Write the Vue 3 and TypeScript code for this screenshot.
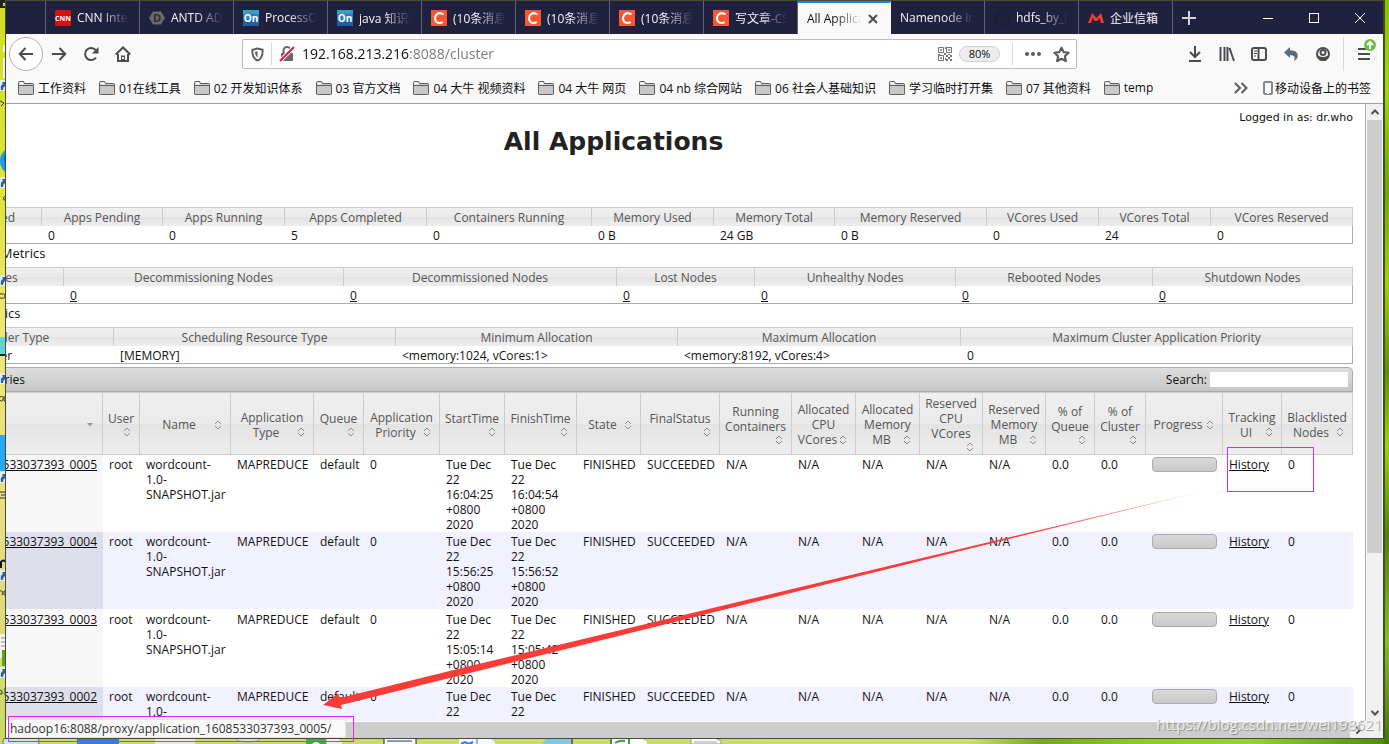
<script setup lang="ts">
import { ref } from 'vue'

interface Tab { label: string; icon: string; active?: boolean }
interface Metric { head: string; value: string; width: number }
interface Column { lines: string[]; width: number; sort: 'inline' | 'below' | 'desc' }
interface AppRow { id: string; start: string; finish: string }

const tabs: Tab[] = [
  { label: 'CNN International', icon: 'cnn' },
  { label: 'ANTD ADMIN', icon: 'antd' },
  { label: 'ProcessOn', icon: 'on' },
  { label: 'java 知识图谱', icon: 'on' },
  { label: '(10条消息)', icon: 'c' },
  { label: '(10条消息)', icon: 'c' },
  { label: '(10条消息)', icon: 'c' },
  { label: '写文章-CSDN', icon: 'c' },
  { label: 'All Applications', icon: '', active: true },
  { label: 'Namenode information', icon: '' },
  { label: 'hdfs_by_lines', icon: 'git' },
  { label: '企业信箱', icon: 'mail' },
]

const bookmarks = ['工作资料', '01在线工具', '02 开发知识体系', '03 官方文档', '04 大牛 视频资料', '04 大牛 网页',
  '04 nb 综合网站', '06 社会人基础知识', '学习临时打开集', '07 其他资料', 'temp']

const clusterMetrics: Metric[] = [
  { head: 'Apps Submitted', value: '5', width: 142 },
  { head: 'Apps Pending', value: '0', width: 121 },
  { head: 'Apps Running', value: '0', width: 122 },
  { head: 'Apps Completed', value: '5', width: 142 },
  { head: 'Containers Running', value: '0', width: 165 },
  { head: 'Memory Used', value: '0 B', width: 122 },
  { head: 'Memory Total', value: '24 GB', width: 121 },
  { head: 'Memory Reserved', value: '0 B', width: 152 },
  { head: 'VCores Used', value: '0', width: 112 },
  { head: 'VCores Total', value: '24', width: 112 },
  { head: 'VCores Reserved', value: '0', width: 142 },
]
const nodeMetrics: Metric[] = [
  { head: 'Active Nodes', value: '3', width: 164 },
  { head: 'Decommissioning Nodes', value: '0', width: 280 },
  { head: 'Decommissioned Nodes', value: '0', width: 273 },
  { head: 'Lost Nodes', value: '0', width: 138 },
  { head: 'Unhealthy Nodes', value: '0', width: 201 },
  { head: 'Rebooted Nodes', value: '0', width: 197 },
  { head: 'Shutdown Nodes', value: '0', width: 200 },
]
const schedulerMetrics: Metric[] = [
  { head: 'Scheduler Type', value: 'Capacity Scheduler', width: 214 },
  { head: 'Scheduling Resource Type', value: '[MEMORY]', width: 282 },
  { head: 'Minimum Allocation', value: '<memory:1024, vCores:1>', width: 282 },
  { head: 'Maximum Allocation', value: '<memory:8192, vCores:4>', width: 283 },
  { head: 'Maximum Cluster Application Priority', value: '0', width: 392 },
]
const sections = [
  { title: '', items: clusterMetrics, link: false },
  { title: 'Cluster Nodes Metrics', items: nodeMetrics, link: true },
  { title: 'Scheduler Metrics', items: schedulerMetrics, link: false },
]

const columns: Column[] = [
  { lines: ['ID'], width: 203, sort: 'desc' },
  { lines: ['User'], width: 37, sort: 'below' },
  { lines: ['Name'], width: 91, sort: 'inline' },
  { lines: ['Application', 'Type'], width: 83, sort: 'inline' },
  { lines: ['Queue'], width: 50, sort: 'below' },
  { lines: ['Application', 'Priority'], width: 76, sort: 'inline' },
  { lines: ['StartTime'], width: 65, sort: 'below' },
  { lines: ['FinishTime'], width: 72, sort: 'below' },
  { lines: ['State'], width: 64, sort: 'inline' },
  { lines: ['FinalStatus'], width: 79, sort: 'below' },
  { lines: ['Running', 'Containers'], width: 72, sort: 'below' },
  { lines: ['Allocated', 'CPU', 'VCores'], width: 64, sort: 'inline' },
  { lines: ['Allocated', 'Memory', 'MB'], width: 64, sort: 'inline' },
  { lines: ['Reserved', 'CPU', 'VCores'], width: 63, sort: 'below' },
  { lines: ['Reserved', 'Memory', 'MB'], width: 63, sort: 'inline' },
  { lines: ['% of', 'Queue'], width: 49, sort: 'below' },
  { lines: ['% of', 'Cluster'], width: 51, sort: 'below' },
  { lines: ['Progress'], width: 77, sort: 'inline' },
  { lines: ['Tracking', 'UI'], width: 59, sort: 'inline' },
  { lines: ['Blacklisted', 'Nodes'], width: 71, sort: 'inline' },
]

const rows: AppRow[] = [
  { id: 'application_1608533037393_0005', start: '16:04:25', finish: '16:04:54' },
  { id: 'application_1608533037393_0004', start: '15:56:25', finish: '15:56:52' },
  { id: 'application_1608533037393_0003', start: '15:05:14', finish: '15:05:42' },
  { id: 'application_1608533037393_0002', start: '14:58:31', finish: '14:59:02' },
]
const stamp = (t: string) => `Tue Dec\n22\n${t}\n+0800\n2020`

const address = ref('192.168.213.216:8088/cluster')
const search = ref('')
const pageSize = ref('20')
const shortcuts = [80, 177, 275, 373, 472, 570, 667]
</script>

<template>
  <div class="desktop">
    <svg class="left-icons" aria-hidden="true">
      <path d="M0 0h6v3H3v3h3v2H0z" fill="#222" />
      <path d="M6 45H3v7h3zM6 58H3v20h3z" fill="#eef" />
      <circle cx="14" cy="161" r="14" fill="#1b9be8" />
      <path d="M6 152q-4 6 0 15z" fill="#1567c0" />
      <rect y="435" width="6" height="36" fill="#27aaf5" />
      <rect y="337" width="6" height="18" fill="#59d9d9" />
      <path d="M0 342h6M0 348h6" stroke="#9aa" />
      <path d="M0 355h6" stroke="#222" stroke-width="2" />
      <rect y="634" width="6" height="24" fill="#f3f3f3" />
      <path d="M1 638h4M1 642h4M1 646h4" stroke="#889" />
      <rect x="2" y="650" width="4" height="16" fill="#5da31d" />
      <g v-for="y in shortcuts" :key="y">
        <rect :y="y" width="6" height="11" fill="#e8edf5" />
        <path :d="`M1 ${y + 10}q-1-5 2-6l-1-2h4v6l-1-2q-2 1-2 4z`" fill="#2a61ad" />
      </g>
      <g fill="none" stroke="#3a3720">
        <path d="M0 101l4 2-3 3M6 196q-4 1-2 4h2M0 294q5-1 5 2t-5 2M0 397q4-2 3 2t-3 1M6 397H4v4h2M0 492h6M1 495h5M0 498h6M0 591q4-1 2 4M6 591H4v4h2M0 690q3 0 2 4H0M5 688v7" />
        <path d="M1 568v-6q2-3 5 0" stroke="#111" stroke-width="2" />
      </g>
    </svg>
    <svg class="taskbar" aria-hidden="true">
      <rect x="3" y="0" width="36" height="8" rx="3" fill="#cfe1ec" stroke="#667" />
      <rect x="77" width="42" height="6" fill="#2b82e6" />
      <rect x="155" width="40" height="6" fill="#e9ecdf" />
      <ellipse cx="248" cy="0" rx="13" ry="4" fill="#d7dbd7" stroke="#999" />
      <rect x="306" width="20" height="6" fill="#3dae49" /><path d="M312 6q4-4 8 0z" fill="#fff" />
      <path d="M327 6V0h10l5 4v2z" fill="#eee" />
      <rect x="384" y="-2" width="32" height="10" fill="#fff" stroke="#222" /><path d="M387 3h25" stroke="#139" />
      <path d="M459 6V0h31l5 4v2z" fill="#f4f8ff" /><path d="M461 6l4-2 4 2 4-2" stroke="#3878dd" stroke-width="2" fill="none" /><path d="M477 0v6" stroke="#3878dd" />
      <path d="M542 6l5-6h25v6z" fill="#83c9df" /><path d="M572 0v6" stroke="#865" stroke-width="2" />
      <path d="M610 6V0h31l6 4v2z" fill="#fff" /><path d="M611 6V0M629 0v6M615 5q5-3 10-2" stroke="#3a9e3e" stroke-width="2" fill="none" />
      <path d="M691 6V0h24l6 3v3z" fill="#fafafa" stroke="#999" /><path d="M694 4h23" stroke="#aaa" />
    </svg>

    <div class="window">
      <nav class="tabbar" aria-label="标签页">
        <div class="tab-lead"></div>
        <button v-for="(t, i) in tabs" :key="i" type="button" class="tab" :class="{ active: t.active }">
          <svg v-if="t.icon" class="fav" viewBox="0 0 16 16" aria-hidden="true">
            <template v-if="t.icon === 'cnn'">
              <rect width="16" height="16" rx="1" fill="#d8100f" />
              <text x="8" y="11" class="fav-cnn">CNN</text>
            </template>
            <template v-else-if="t.icon === 'antd'">
              <path d="M4 1.5h8L16 8l-4 6.500H4L0 8z" fill="#6a6a68" />
              <text x="8" y="12" class="fav-d">D</text>
            </template>
            <template v-else-if="t.icon === 'on'">
              <rect width="16" height="16" fill="#1f5fa5" /><rect width="16" height="8" fill="#389fc4" /><rect y="4" width="16" height="6" fill="#2a80b6" />
              <text x="8" y="12" class="fav-on">On</text>
            </template>
            <template v-else-if="t.icon === 'c'">
              <rect width="16" height="16" fill="#fc5531" />
              <path d="M12.500 4.500Q8 1.500 5 5.200Q2.800 9 5.500 12Q8 14 11.800 12.200" fill="none" stroke="#fff" stroke-width="2" />
            </template>
            <template v-else-if="t.icon === 'git'">
              <circle cx="8" cy="8" r="7" fill="none" stroke="#1b2130" stroke-width="2" />
              <path d="M4 3v4q0 4 4 4t4-4V3L9.500 4.500h-3zM6 11v4h4v-4" fill="#20203f" stroke="#1b2130" />
            </template>
            <path v-else d="M0 13L4 3l4.500 5L13 3l3 10h-3l-1.500-5L9 11H7L4.500 8 3 13z" fill="#f03a33" />
          </svg>
          <span class="tab-label">{{ t.label }}</span>
          <svg v-if="t.active" class="close" viewBox="0 0 10 10" aria-hidden="true"><path d="M1 1l8 8M9 1l-8 8" stroke="#4a4a4f" stroke-width="2" /></svg>
        </button>
        <button type="button" class="newtab" aria-label="新标签页">
          <svg width="14" height="14" viewBox="0 0 14 14"><path d="M7 0v14M0 7h14" stroke="#d2d2da" stroke-width="2" /></svg>
        </button>
        <div class="controls">
          <button type="button" aria-label="最小化"><svg width="10" height="10"><path d="M0 5.500h10" stroke="#fff" /></svg></button>
          <button type="button" aria-label="最大化"><svg width="10" height="10"><rect x=".5" y=".5" width="9" height="9" fill="none" stroke="#fff" /></svg></button>
          <button type="button" aria-label="关闭"><svg width="10" height="10"><path d="M0 0l10 10M10 0L0 10" stroke="#fff" /></svg></button>
        </div>
      </nav>

      <div class="toolbar">
        <div class="nav-group">
          <button type="button" class="back" aria-label="后退">
            <svg class="ic" viewBox="0 0 16 16"><path d="M15 8H2M7.500 2L1.800 8l5.700 6" /></svg>
          </button>
          <button type="button" aria-label="前进"><svg class="ic" viewBox="0 0 16 16"><path d="M1 8h13M8.500 2l5.700 6-5.700 6" /></svg></button>
          <button type="button" aria-label="刷新">
            <svg class="ic" viewBox="0 0 16 16"><path d="M12.700 4.200A6 6 0 1 0 13 11.500" /><path class="solid" d="M15.500 1v6.500H9z" /></svg>
          </button>
          <button type="button" aria-label="主页">
            <svg class="ic" viewBox="0 0 16 16"><path d="M.8 8.500L8 1.500l7.200 7M3 8v7h10V8" /><path class="solid" d="M6 9.500h4V15H6z" /><path d="M8 11v2" stroke="#fff" /></svg>
          </button>
        </div>

        <div class="urlbar">
          <svg class="shield" viewBox="0 0 14 16" aria-hidden="true">
            <path d="M7 1.500Q4 2.800 1.500 2.800Q1 12 7 14.500Q13 12 12.500 2.800Q10 2.800 7 1.500z" fill="none" stroke="#5a5a5e" stroke-width="2" />
            <path d="M7 4.500v7Q4.500 9.500 4.200 5.200z" fill="#5a5a5e" />
          </svg>
          <i class="sep"></i>
          <svg class="lock" viewBox="0 0 16 16" aria-hidden="true">
            <path d="M4.500 8V4.500a3.500 3.500 0 0 1 7 0V8" fill="none" stroke="#68686c" stroke-width="2" />
            <rect x="2" y="7" width="12" height="8" rx="1" fill="#68686c" />
            <path d="M1 15L15 1" stroke="#fff" stroke-width="4" /><path d="M1 15L15 1" stroke="#e31640" stroke-width="2" />
          </svg>
          <input v-model="address" class="address" type="text" aria-label="地址" />
          <svg class="qr" viewBox="0 0 14 14" aria-hidden="true">
            <path d="M.5.5h5v5h-5zM8.500.5h5v5h-5zM.5 8.500h5v5h-5zM2.500 2.500h1v1h-1zM10.500 2.500h1v1h-1zM2.500 10.500h1v1h-1z" fill="none" stroke="#6f7276" />
            <path d="M7 0h1v2H7zM6 6h2v2H6zM0 7h2v1H0zM10 7h2v1h-2zM8 8h2v2H8zM12 8h2v2h-2zM10 10h2v2h-2zM8 12h2v2H8zM12 12h2v2h-2zM7 11h1v2H7z" fill="#6f7276" />
          </svg>
          <button type="button" class="zoom">80%</button>
          <i class="sep"></i>
          <svg class="dots" viewBox="0 0 16 16" aria-hidden="true"><circle cx="2" cy="8" r="2" /><circle cx="8" cy="8" r="2" /><circle cx="14" cy="8" r="2" /></svg>
          <svg class="star" viewBox="0 0 16 16" aria-hidden="true"><path d="M8 1.500l2 4.300 4.700.6-3.500 3.200.9 4.700L8 12l-4.100 2.300.9-4.700L1.300 6.400 6 5.800z" fill="none" stroke="#5a5a5e" stroke-width="2" stroke-linejoin="round" /></svg>
        </div>

        <div class="tools">
          <button type="button" aria-label="下载"><svg class="ic" viewBox="0 0 16 16"><path d="M8 0v10M3 6l5 5 5-5M2 15h12" /></svg></button>
          <button type="button" aria-label="书库"><svg class="ic" viewBox="0 0 16 16"><path d="M1.500 1v14M5.500 1v14M8.500 1v14M10.500 2l4.500 13" /></svg></button>
          <button type="button" aria-label="侧栏"><svg class="ic" viewBox="0 0 16 16"><rect x="1" y="2" width="14" height="12" rx="2" /><path d="M7.500 2v12" /><path d="M3 5h3M3 7.500h3M3 10h2" stroke-width="1" /></svg></button>
          <button type="button" aria-label="撤销"><svg class="ic" viewBox="0 0 16 16"><path d="M1 6.500L7 1v3.200Q15 4 14.800 10.500Q14 14 11 15Q13.500 9 7 9v3z" fill="#5c6c80" stroke="none" /></svg></button>
          <button type="button" aria-label="账户"><svg class="ic" viewBox="0 0 16 16"><circle cx="8" cy="8" r="6" /><path class="solid" d="M2 9q6 4 12 0l-2.500 5.500h-7z" /><circle cx="8" cy="6.500" r="2.500" fill="#f9f9fa" /></svg></button>
          <i class="tool-sep"></i>
          <button type="button" class="menu" aria-label="菜单">
            <svg class="ic" viewBox="0 0 16 16"><path d="M2 3h12M2 8h12M2 13h12" /></svg>
            <svg class="badge" viewBox="0 0 12 12"><circle cx="6" cy="6" r="6" fill="#6cbf3f" /><path d="M6 10V3M3 6l3-3 3 3" fill="none" stroke="#fff" stroke-width="2" /></svg>
          </button>
        </div>
      </div>

      <div class="bookmarks">
        <a v-for="b in bookmarks" :key="b" href="#">
          <svg class="folder" viewBox="0 0 16 14" aria-hidden="true"><path d="M.5 13V1.500q0-1 1-1h4l1 2h8q1 0 1 1V13q0 .5-1 .5h-13q-1 0-1-.5z" fill="#c8c8c8" stroke="#5f5f5f" /><path d="M1 4.500h14" stroke="#5f5f5f" /><path d="M1.500 3.500V1.500h3.500l1 2z" fill="#fff" /></svg>
          {{ b }}
        </a>
        <button type="button" class="more" aria-label="更多书签"><svg width="14" height="12" viewBox="0 0 14 12"><path d="M1 1l5 5-5 5M7.500 1l5 5-5 5" fill="none" stroke="#5a5a5e" stroke-width="2" /></svg></button>
        <a href="#" class="mobile">
          <svg width="10" height="14" viewBox="0 0 10 14" aria-hidden="true"><rect x="1" y="1" width="8" height="12" rx="1" fill="#f8fbff" stroke="#7c8b99" stroke-width="2" /><path d="M4 12.500h2" stroke="#fff" /></svg>
          移动设备上的书签
        </a>
      </div>

      <main class="frame">
        <div class="viewport">
          <div class="doc">
            <div class="login">Logged in as: dr.who</div>
            <h1>All Applications</h1>

            <section v-for="(s, k) in sections" :key="k">
              <h2 v-if="s.title">{{ s.title }}</h2>
              <table class="metrics">
                <colgroup><col v-for="m in s.items" :key="m.head" :style="{ width: m.width + 'px' }" /></colgroup>
                <thead><tr><th v-for="m in s.items" :key="m.head" scope="col">{{ m.head }}</th></tr></thead>
                <tbody><tr><td v-for="m in s.items" :key="m.head"><a v-if="s.link" href="#">{{ m.value }}</a><template v-else>{{ m.value }}</template></td></tr></tbody>
              </table>
            </section>

            <div class="bar">
              <label class="show">Show <select v-model="pageSize"><option>20</option><option>40</option><option>100</option></select> entries</label>
              <label class="find">Search: <input v-model="search" type="search" /></label>
            </div>
            <table class="apps">
              <colgroup><col v-for="(c, i) in columns" :key="i" :style="{ width: c.width + 'px' }" /></colgroup>
              <thead>
                <tr>
                  <th v-for="(c, i) in columns" :key="i" scope="col">
                    <span v-for="l in c.lines.slice(0, -1)" :key="l" class="hl">{{ l }}</span>
                    <span class="hl last" :class="c.sort">
                      <span class="grow">{{ c.lines[c.lines.length - 1] }}</span>
                      <svg class="sort" viewBox="0 0 12 12" aria-hidden="true">
                        <path v-if="c.sort === 'desc'" d="M3 4h6L6 7.500z" fill="#999" />
                        <path v-else d="M3 5l3-3 3 3M3 7l3 3 3-3" fill="none" stroke="#8e8e8e" />
                      </svg>
                    </span>
                  </th>
                </tr>
              </thead>
              <tbody>
                <tr v-for="r in rows" :key="r.id">
                  <td class="id"><a href="#">{{ r.id }}</a></td>
                  <td>root</td>
                  <td>{{ 'wordcount-\n1.0-\nSNAPSHOT.jar' }}</td>
                  <td>MAPREDUCE</td>
                  <td>default</td>
                  <td>0</td>
                  <td>{{ stamp(r.start) }}</td>
                  <td>{{ stamp(r.finish) }}</td>
                  <td>FINISHED</td>
                  <td>SUCCEEDED</td>
                  <td v-for="n in 5" :key="n">N/A</td>
                  <td>0.0</td>
                  <td>0.0</td>
                  <td><div class="progress"></div></td>
                  <td><a href="#">History</a></td>
                  <td>0</td>
                </tr>
              </tbody>
            </table>
          </div>
        </div>
        <div class="vscroll">
          <svg class="arrow" viewBox="0 0 16 16"><path d="M4.500 10L8 6.500l3.500 3.500" /></svg>
          <div class="thumb"></div><div class="track"></div>
          <svg class="arrow" viewBox="0 0 16 16"><path d="M4.500 6L8 9.500 11.500 6" /></svg>
        </div>
        <div class="hscroll">
          <div class="hthumb"></div>
          <svg class="arrow" viewBox="0 0 16 16"><path d="M6.500 4.500L10 8l-3.500 3.500" /></svg>
        </div>
        <div class="corner"></div>
      </main>
      <div class="status">hadoop16:8088/proxy/application_1608533037393_0005/</div>
    </div>

    <svg class="marks" aria-hidden="true">
      <defs>
        <linearGradient id="fade" gradientUnits="userSpaceOnUse" x1="323" y1="705" x2="1203" y2="491">
          <stop offset="0" stop-color="#fb3b37" /><stop offset=".8" stop-color="#fb3b37" /><stop offset="1" stop-color="#fb3b37" stop-opacity=".4" />
        </linearGradient>
      </defs>
      <path d="M323 705L338 693.500L340 698L470 666L920 558.500L1206 490.500L920 561L470 673L341 705L342 709z" fill="url(#fade)" />
      <rect x="1227.500" y="447.500" width="86" height="44" fill="none" stroke="#e02be0" />
      <rect x="8.500" y="716.500" width="345" height="25" fill="none" stroke="#ee22ee" />
    </svg>
    <div class="watermark">https://blog.csdn.net/wei198621</div>
  </div>
</template>

<style>
body { margin: 0; overflow: hidden; }
</style>

<style scoped>
* { box-sizing: border-box; }
.desktop {
  position: relative;
  height: 100vh;
  padding: 1px 5px 6px 6px;
  overflow: hidden;
  font-family: "Open Sans", "Noto Sans CJK SC", sans-serif;
  font-size: 12px;
  color: #111;
  background:
    linear-gradient(#7fc400, #a4dc00 12%, #6aa800 25%, #a0d400 38%, #5c9200 50%, #9bd600 60%, #4c8600 72%, #86bf20 86%, #3f7a08) right / 5px 100% no-repeat,
    linear-gradient(90deg, #cadb6c 0, #cbdc70 70%, #74a81e 75%, #8ccc22 82%, #94d430 90%, #4a8a10) bottom / 100% 6px no-repeat,
    linear-gradient(#cfe022, #dbe53a 25%, #f0e578 45%, #e6dc84 75%, #cbd95e) #d5dc60;
}
button { border: 0; padding: 0; background: none; font: inherit; color: inherit; display: flex; align-items: center; justify-content: center; }
a { color: inherit; }
.left-icons { position: absolute; left: 0; top: 0; width: 6px; height: 100%; }
.taskbar { position: absolute; left: 0; bottom: 0; width: 100%; height: 6px; }
.window {
  position: relative;
  height: 100%;
  display: flex;
  flex-direction: column;
  background: #f9f9fa;
  border-right: 1px solid #3f4a22;
  outline: 1px solid #4a4b33;
}
.tabbar { display: flex; height: 33px; flex: none; background: #20213f; color: #f3f3f7; }
.tab-lead { width: 40px; border-right: 1px solid #606078; }
.tab {
  flex: 0 1 94px;
  min-width: 0;
  justify-content: flex-start;
  gap: 6px;
  padding: 0 10px 0 9px;
  border-right: 1px solid #606078;
}
.tab.active { flex-basis: 93px; background: #f9f9fa; color: #0c0c0d; border-top: 2px solid #0a84ff; border-right-color: #f9f9fa; }
.fav { width: 16px; height: 16px; flex: none; }
.fav text { fill: #fff; text-anchor: middle; font-weight: 700; }
.fav-cnn { font-size: 7px; }
.fav-on { font-size: 10px; }
.fav .fav-d { font-size: 11px; fill: #2b2b3a; }
.tab-label {
  flex: 1;
  min-width: 0;
  overflow: hidden;
  white-space: nowrap;
  text-align: left;
  -webkit-mask-image: linear-gradient(90deg, #000 calc(100% - 28px), transparent);
  mask-image: linear-gradient(90deg, #000 calc(100% - 28px), transparent);
}
.tab:nth-last-child(3) .tab-label { -webkit-mask-image: none; mask-image: none; }
.close { width: 10px; height: 10px; flex: none; margin-right: 2px; }
.newtab { width: 32px; }
.controls { display: flex; margin-left: auto; }
.controls button { width: 46px; }

.toolbar { display: flex; align-items: center; height: 40px; flex: none; padding-left: 3px; padding-right: 11px; }
.nav-group, .tools { display: flex; align-items: center; gap: 16px; }
.back { width: 34px; height: 34px; border: 1px solid #b1b1b3; border-radius: 50%; background: #fff; margin-right: -8px; }
.ic { width: 16px; height: 16px; fill: none; stroke: #4c4c50; stroke-width: 2; display: block; }
.ic .solid { fill: #4c4c50; stroke: none; }
.urlbar {
  flex: 1;
  display: flex;
  align-items: center;
  height: 30px;
  margin: 0 110px 0 111px;
  padding: 0 6px 0 8px;
  background: #fff;
  border: 1px solid #bcbcbe;
  border-radius: 2px;
}
.sep { width: 1px; height: 22px; background: #d9d9dc; margin: 0 7px; }
.shield { width: 13px; height: 15px; }
.lock { width: 16px; height: 16px; }
.address {
  flex: 1;
  min-width: 0;
  margin-left: 7px;
  padding: 0;
  border: 0;
  outline: 0;
  font: inherit;
  font-size: 14px;
  line-height: 24px;
  color: transparent;
  background: linear-gradient(90deg, #0c0c0d 108px, #77777a 108px);
  -webkit-background-clip: text;
  background-clip: text;
}
.qr { width: 14px; height: 14px; }
.zoom { width: 41px; height: 16px; margin: 0 5px 0 7px; border: 1px solid #d0d0d3; border-radius: 8px; background: #ededf0; font-size: 11px; line-height: 14px; color: #0c0c0d; }
.dots { width: 16px; height: 16px; margin: 0 12px 0 5px; fill: #5a5a5e; }
.star { width: 17px; height: 17px; }
.tool-sep { width: 1px; height: 34px; background: #d9d9dc; margin: 0 -4px; }
.menu { position: relative; }
.badge { position: absolute; width: 12px; height: 12px; left: 8px; top: -7px; }

.bookmarks { display: flex; align-items: center; gap: 13px; height: 29px; flex: none; padding: 0 12px 2px 12px; white-space: nowrap; }
.bookmarks a { display: flex; align-items: center; gap: 4px; text-decoration: none; color: #0c0c0d; }
.folder { width: 16px; height: 14px; }
.more { margin-left: auto; }
.bookmarks .mobile { gap: 2px; margin-left: 2px; }

.frame { flex: 1; min-height: 0; display: grid; grid-template-columns: minmax(0, 1fr) 17px; grid-template-rows: minmax(0, 1fr) 17px; border-top: 1px solid #a0a0a4; }
.viewport { overflow: hidden; background: #fff; border-right: 1px solid #a9a9ad; }
/* the document is scrolled sideways past its first columns */
.doc { margin: 0 12px 0 -106px; }
.login { padding-top: 7px; text-align: right; font: 11px/14px "DejaVu Sans", sans-serif; }
h1 { margin: 1px 26px 49px 0; text-align: center; font: bold 25px/32px "DejaVu Sans", sans-serif; color: #222; }
h2 { margin: 0; padding: 0 12px 5px; font-size: 13px; line-height: 18px; font-weight: 400; }
table { width: 100%; table-layout: fixed; border-collapse: separate; border-spacing: 0; }
th {
  font-weight: 400;
  color: #555;
  border-top: 1px solid #ccc;
  border-right: 1px solid #ccc;
  background: linear-gradient(#efefef, #eaeaea 50%, #e3e3e3 50%, #eeeeee);
}
.metrics { white-space: nowrap; }
.metrics th { padding: 2px 4px 0; line-height: 16px; }
.metrics td { padding: 2px 6px 0; line-height: 15px; border-bottom: 1px solid #aaa; background: #fff; }
.metrics td:last-child { border-right: 1px solid #aaa; }
.bar {
  display: flex;
  justify-content: space-between;
  align-items: center;
  height: 25px;
  margin-top: 3px;
  padding: 0 4px 0 6px;
  border: 1px solid #aaa;
  border-radius: 5px 5px 0 0;
  background: linear-gradient(#dedede, #c6c6c6);
}
.show { display: flex; justify-content: space-between; align-items: center; width: 118px; }
.show select { width: 40px; height: 17px; padding: 0; font: inherit; font-size: 11px; }
.find { display: flex; align-items: center; gap: 3px; }
.find input { width: 138px; height: 15px; border: 0; padding: 0 2px; background: #fff; font: inherit; }
.apps th { height: 63px; padding: 2px 6px 0; vertical-align: middle; border-bottom: 1px solid #ccc; line-height: 15px; white-space: nowrap; }
.hl { display: flex; justify-content: center; }
.last .grow { flex: 1; display: flex; justify-content: center; }
.last.below { flex-direction: column; align-items: center; }
.last.below .sort { align-self: flex-end; }
.last.inline, .last.desc { align-items: center; }
.sort { width: 12px; height: 12px; flex: none; }
.apps td { height: 77px; padding: 2px 6px 0; vertical-align: top; line-height: 15px; white-space: pre; }
.apps tr:nth-child(3) td { padding-top: 3px; }
.apps tr:nth-child(even) td { background: #f1f1ff; }
.apps tr td.id { background: #f7f7f7; text-align: right; }
.apps tr:nth-child(even) td.id { background: #dfdfec; }
.progress { height: 15px; border: 1px solid #aaa; border-radius: 4px; background: linear-gradient(#d9d9d9, #c9c9c9); }

.vscroll { display: flex; flex-direction: column; background: #f0f0f0; border-left: 1px solid #fff; }
.thumb { flex: 433; background: #cdcdcd; margin-right: 1px; }
.track { flex: 152; }
.arrow { width: 16px; height: 16px; flex: none; fill: none; stroke: #505050; stroke-width: 2; }
.hscroll { display: flex; background: #f0f0f0; border-top: 1px solid #fff; }
.hthumb { flex: 1; background: #cdcdcd; }
.corner { background: #f0f0f0; }
.status { position: absolute; left: 0; bottom: 0; height: 19px; padding: 0 14px 0 4px; line-height: 18px; background: #f9f9fa; border: 1px solid #e2e2e2; border-left: 0; color: #333; }
.marks { position: absolute; left: 0; top: 0; width: 100%; height: 100%; pointer-events: none; }
.watermark { position: absolute; right: 7px; bottom: 9px; font-size: 15px; line-height: 22px; color: rgba(255, 255, 255, .75); text-shadow: 1px 1px 1px rgba(110, 110, 110, .7); }
</style>
